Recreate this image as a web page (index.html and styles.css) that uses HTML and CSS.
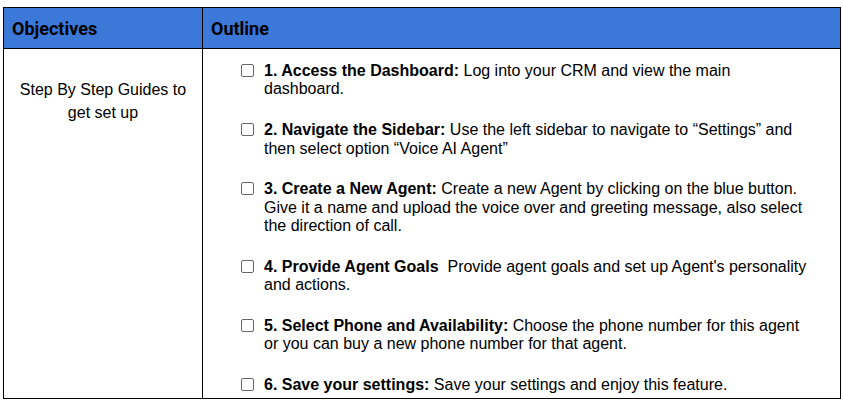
FILE: index.html
```html
<!DOCTYPE html>
<html lang="en">
<head>
    <meta charset="UTF-8">
    <meta name="viewport" content="width=device-width, initial-scale=1.0">
    <title>Voice AI Agent Setup</title>
    <link rel="stylesheet" href="styles.css">
</head>
<body>
    <table class="guide">
        <thead>
            <tr>
                <th class="col-obj">Objectives</th>
                <th>Outline</th>
            </tr>
        </thead>
        <tbody>
            <tr>
                <td class="objective">Step By Step Guides to get set up</td>
                <td class="outline">
                    <ul class="checklist">
                        <li><span class="box"></span><p><b>1. Access the Dashboard:</b> Log into your CRM and view the main dashboard.</p></li>
                        <li><span class="box"></span><p><b>2. Navigate the Sidebar:</b> Use the left sidebar to navigate to “Settings” and then select option “Voice AI Agent”</p></li>
                        <li><span class="box"></span><p><b>3. Create a New Agent:</b> Create a new Agent by clicking on the blue button. Give it a name and upload the voice over and greeting message, also select the direction of call.</p></li>
                        <li><span class="box"></span><p><b>4. Provide Agent Goals</b>&nbsp; Provide agent goals and set up Agent's personality and actions.</p></li>
                        <li><span class="box"></span><p><b>5. Select Phone and Availability:</b> Choose the phone number for this agent or you can buy a new phone number for that agent.</p></li>
                        <li><span class="box"></span><p><b>6. Save your settings:</b> Save your settings and enjoy this feature.</p></li>
                    </ul>
                </td>
            </tr>
        </tbody>
    </table>
</body>
</html>
```

FILE: styles.css
```css
/* Page */
body {
    margin: 0;
    padding: 7px 3px 0;
    background: #ffffff;
    font-family: "Liberation Sans", Arial, sans-serif;
    color: #000000;
}

.guide {
    width: 838px;
    border-collapse: collapse;
}

.guide th,
.guide td {
    border: 1px solid #000000;
}

/* Header row */
.guide th {
    height: 40px;
    padding: 0 8px;
    background: #3c78d8;
    font-family: Roboto, "Liberation Sans", sans-serif;
    font-size: 18px;
    font-weight: bold;
    text-align: left;
    color: #000000;
}

.col-obj {
    width: 182px;
}

/* Body row */
.objective {
    height: 319px;
    padding: 30px 10px 0;
    vertical-align: top;
    text-align: center;
    font-size: 16px;
    line-height: 22.5px;
}

.outline {
    padding: 13px 26px 0 38px;
    vertical-align: top;
}

.checklist {
    margin: 0;
    padding: 0;
    list-style: none;
}

.checklist li {
    display: flex;
    align-items: flex-start;
    margin-bottom: 22.4px;
}

.checklist li:last-child {
    margin-bottom: 0;
}

.checklist p {
    margin: 0;
    font-size: 16px;
    line-height: 1.15;
}

.box {
    flex: none;
    width: 11px;
    height: 11px;
    margin: 2px 10px 0 0;
    border: 1.5px solid #666666;
    border-radius: 2px;
}
```
